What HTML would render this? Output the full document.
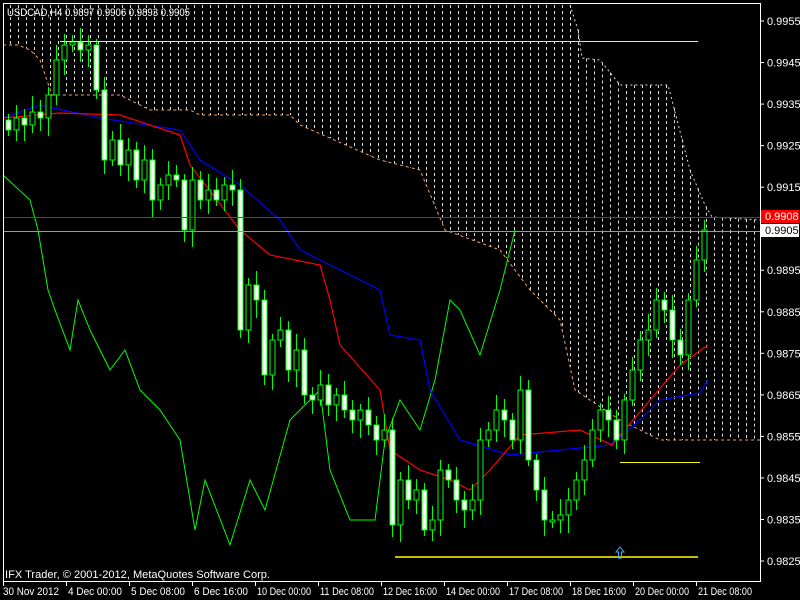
<!DOCTYPE html>
<html><head><meta charset="utf-8"><style>
html,body{margin:0;padding:0;background:#000;width:800px;height:600px;overflow:hidden}
svg{display:block}
text{font-family:"Liberation Sans",sans-serif;font-size:11px}
</style></head><body>
<svg id="c" width="800" height="600" xmlns="http://www.w3.org/2000/svg">
<rect width="800" height="600" fill="#000"/>
<g id="cloud"></g>
<g id="lines"></g>
<g id="candles"></g>
<line x1="60" y1="41.5" x2="698" y2="41.5" stroke="#ddd" stroke-width="1"/>
<line x1="3" y1="217.5" x2="760" y2="217.5" stroke="#f00" stroke-width="1"/>
<line x1="3" y1="231.5" x2="760" y2="231.5" stroke="#999" stroke-width="1"/>
<line x1="395" y1="557" x2="698" y2="557" stroke="#ff0" stroke-width="1.5"/>
<line x1="620" y1="462.5" x2="700" y2="462.5" stroke="#ff0" stroke-width="1"/>
<path d="M620 547 l-4 5 h2.5 v6 h3 v-6 h2.5 z" fill="none" stroke="#29b6f6" stroke-width="1"/>
<rect x="3.5" y="3.5" width="757" height="578" fill="none" stroke="#fff" stroke-width="1"/>
<text x="7" y="16" fill="#fff" textLength="183" lengthAdjust="spacingAndGlyphs">USDCAD,H4 0.9897 0.9906 0.9893 0.9905</text>
<text x="5" y="578" fill="#fff" font-size="12" textLength="265" lengthAdjust="spacingAndGlyphs">IFX Trader, © 2001-2012, MetaQuotes Software Corp.</text>
<g id="axis" fill="#fff"></g>
<rect x="761" y="210" width="38" height="13" fill="#f00"/>
<text x="765" y="220" fill="#fff" font-size="10">0.9908</text>
<rect x="761" y="224" width="38" height="13" fill="#fff"/>
<text x="765" y="234" fill="#000" font-size="10">0.9905</text>
</svg>
<script>
(function(){
var NS="http://www.w3.org/2000/svg";
function el(p,t,a){var e=document.createElementNS(NS,t);for(var k in a)e.setAttribute(k,a[k]);p.appendChild(e);return e;}
function interp(pts,x){for(var i=0;i<pts.length-1;i++){if(x>=pts[i][0]&&x<=pts[i+1][0]){var t=(x-pts[i][0])/(pts[i+1][0]-pts[i][0]);return pts[i][1]+t*(pts[i+1][1]-pts[i][1]);}}return pts[pts.length-1][1];}
function path(pts){return "M"+pts.map(function(p){return p[0]+" "+p[1]}).join(" L");}
var topB=[[3,5],[570,5],[578,30],[582,58],[600,60],[620,85],[668,85],[690,170],[705,205],[712,217],[760,220]];
var botB=[[3,45],[18,45],[30,50],[40,60],[52,95],[120,95],[150,110],[190,110],[200,115],[290,115],[300,125],[380,160],[420,170],[445,230],[500,250],[530,290],[560,320],[575,390],[620,420],[660,440],[760,440]];
var cg=document.getElementById("cloud");
for(var x=10;x<758;x+=8){var a=interp(topB,x),b=interp(botB,x);if(b-a>4)el(cg,"line",{x1:x+.5,y1:a,x2:x+.5,y2:b,stroke:"#ddd","stroke-dasharray":"3,3","stroke-width":1});}
el(cg,"path",{d:path(botB),fill:"none",stroke:"#f4a460","stroke-dasharray":"3,3","stroke-width":1});
el(cg,"path",{d:path(topB.slice(1)),fill:"none",stroke:"#ddd","stroke-dasharray":"2,3","stroke-width":1});
var lg=document.getElementById("lines");
var blue=[[3,118],[40,105],[100,118],[180,130],[200,160],[240,185],[280,220],[300,250],[340,270],[380,290],[390,335],[420,340],[430,390],[460,440],[510,455],[560,450],[610,445],[640,420],[660,400],[700,393],[708,380]];
var red=[[3,118],[60,113],[120,115],[180,135],[190,165],[240,230],[270,255],[320,265],[330,300],[340,345],[380,390],[390,450],[420,470],[450,480],[470,490],[490,470],[520,435],[580,430],[612,445],[650,400],[680,365],[708,345]];
var green=[[3,175],[30,200],[38,230],[48,290],[55,310],[70,350],[78,300],[90,330],[110,370],[125,350],[140,390],[160,410],[180,440],[195,530],[205,480],[230,545],[250,480],[265,510],[290,420],[320,390],[330,470],[350,520],[375,520],[385,440],[400,400],[420,430],[435,380],[450,300],[460,310],[480,355],[500,290],[515,230]];
el(lg,"path",{d:path(green),fill:"none",stroke:"#0f0","stroke-width":1});
el(lg,"path",{d:path(blue),fill:"none",stroke:"#00f","stroke-width":1.2});
el(lg,"path",{d:path(red),fill:"none",stroke:"#f00","stroke-width":1.2});
var cl=[130,118,125,112,118,95,60,45,42,50,45,90,160,140,165,150,180,160,200,185,175,180,230,180,200,190,200,185,190,330,285,300,375,340,330,370,350,395,400,385,405,395,410,420,410,425,440,430,525,480,500,490,530,520,470,480,500,510,500,440,430,410,420,440,390,460,490,520,520,515,500,480,460,430,410,420,440,400,370,340,330,300,310,340,355,300,260,230];
var cdg=document.getElementById("candles");var prev=120;
for(var i=0;i<cl.length;i++){var xx=8+i*8,o=prev,c=cl[i];prev=c;var hi=Math.min(o,c)-6-(i*7%11),lo=Math.max(o,c)+6+(i*5%13);
el(cdg,"line",{x1:xx+.5,y1:hi,x2:xx+.5,y2:lo,stroke:"#0f0","stroke-width":1});
var y1=Math.min(o,c),h=Math.max(2,Math.abs(o-c));
el(cdg,"rect",{x:xx-2,y:y1,width:5,height:h,fill:c>o?"#fff":"#000",stroke:"#0f0","stroke-width":1});}
var ax=document.getElementById("axis");
var pr=["0.9955","0.9945","0.9935","0.9925","0.9915","","0.9895","0.9885","0.9875","0.9865","0.9855","0.9845","0.9835","0.9825"];
for(var j=0;j<pr.length;j++){var y=21+j*41.54;if(!pr[j])continue;el(ax,"line",{x1:760,y1:y,x2:764,y2:y,stroke:"#fff"});var t=el(ax,"text",{x:767,y:y+4,"font-size":"10"});t.textContent=pr[j];}
var d=["30 Nov 2012","4 Dec 00:00","5 Dec 08:00","6 Dec 16:00","10 Dec 00:00","11 Dec 08:00","12 Dec 16:00","14 Dec 00:00","17 Dec 08:00","18 Dec 16:00","20 Dec 00:00","21 Dec 08:00"];
for(var k=0;k<d.length;k++){var x2=3+k*63;el(ax,"line",{x1:x2+.5,y1:582,x2:x2+.5,y2:586,stroke:"#fff"});var t2=el(ax,"text",{x:x2+(k==0?0:2),y:595,"font-size":"10",textLength:(k==0?56:54),lengthAdjust:"spacingAndGlyphs"});t2.textContent=d[k];}
})();
</script>
</body></html>
